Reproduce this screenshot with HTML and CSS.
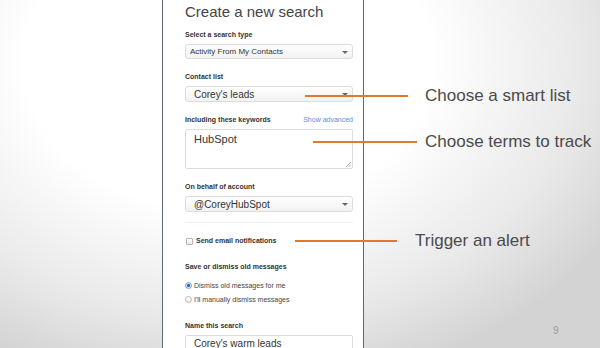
FILE: index.html
```html
<!DOCTYPE html>
<html lang="en">
<head>
    <meta charset="UTF-8">
    <title>Create a new search</title>
    <link rel="stylesheet" href="styles.css">
</head>
<body>
    <div class="slide">
        <div class="panel">
            <h1>Create a new search</h1>

            <div class="field">
                <div class="label">Select a search type</div>
                <div class="select small">Activity From My Contacts<span class="arrow"></span></div>
            </div>

            <div class="field">
                <div class="label">Contact list</div>
                <div class="select">Corey's leads<span class="arrow"></span></div>
            </div>

            <div class="field">
                <div class="label-row">
                    <div class="label">Including these keywords</div>
                    <a class="link">Show advanced</a>
                </div>
                <div class="textarea">
                    HubSpot
                    <svg class="grip" width="6" height="6" viewBox="0 0 6 6">
                        <path d="M1 6 L6 1 M3.5 6 L6 3.5" stroke="#aaa" stroke-width="0.8"/>
                    </svg>
                </div>
            </div>

            <div class="field">
                <div class="label">On behalf of account</div>
                <div class="select">@CoreyHubSpot<span class="arrow"></span></div>
            </div>

            <div class="divider"></div>

            <div class="check-row">
                <span class="checkbox"></span>
                <span class="label">Send email notifications</span>
            </div>

            <div class="label group-label">Save or dismiss old messages</div>
            <div class="radio-row">
                <span class="radio checked"></span>
                <span>Dismiss old messages for me</span>
            </div>
            <div class="radio-row">
                <span class="radio"></span>
                <span>I'll manually dismiss messages</span>
            </div>

            <div class="field name-field">
                <div class="label">Name this search</div>
                <div class="input">Corey's warm leads</div>
            </div>
        </div>

        <!-- annotations drawn over the screenshot -->
        <div class="callout callout-list">
            <span class="callout-line"></span>
            <span class="callout-text">Choose a smart list</span>
        </div>
        <div class="callout callout-terms">
            <span class="callout-line"></span>
            <span class="callout-text">Choose terms to track</span>
        </div>
        <div class="callout callout-alert">
            <span class="callout-line"></span>
            <span class="callout-text">Trigger an alert</span>
        </div>

        <div class="page-number">9</div>
    </div>
</body>
</html>
```

FILE: styles.css
```css
body {
    margin: 0;
    font-family: "Liberation Sans", Arial, sans-serif;
    color: #333;
}

.slide {
    position: relative;
    width: 600px;
    height: 348px;
    overflow: hidden;
    background: radial-gradient(ellipse 75% 95% at 38% 18%, #ffffff 45%, #e9e9e9 78%, #d3d3d3 100%);
}

.panel {
    box-sizing: border-box;
    width: 202px;
    height: 348px;
    margin-left: 162px;
    padding: 3px 10px 0 22px;
    background: #fff;
    border-left: 1px solid #5f686c;
    border-right: 1px solid #5f686c;
}

h1 {
    margin: 0 0 9px;
    font-size: 15px;
    line-height: 18px;
    font-weight: normal;
    color: #444;
}

.field {
    margin-bottom: 13px;
}

.label {
    font-size: 7px;
    line-height: 10px;
    font-weight: bold;
    color: #333;
}

.field .label {
    margin-bottom: 4px;
}

.label-row {
    display: flex;
    justify-content: space-between;
    align-items: flex-start;
}

.link {
    font-size: 7px;
    line-height: 10px;
    color: #5a8fdc;
}

.select {
    position: relative;
    box-sizing: border-box;
    height: 16px;
    padding-left: 8px;
    font-size: 10px;
    line-height: 15px;
    color: #333;
    border: 1px solid #dcdcdc;
    border-radius: 3px;
    background: linear-gradient(#ffffff, #f2f2f2);
}

.select.small {
    height: 15px;
    padding-left: 4px;
    font-size: 8px;
    line-height: 13px;
}

.arrow {
    position: absolute;
    right: 4px;
    top: 6px;
    border-left: 3px solid transparent;
    border-right: 3px solid transparent;
    border-top: 3px solid #666;
}

.textarea {
    position: relative;
    box-sizing: border-box;
    height: 40px;
    padding: 3px 8px;
    font-size: 11px;
    line-height: 12px;
    color: #333;
    border: 1px solid #dcdcdc;
    border-radius: 2px;
}

.grip {
    position: absolute;
    right: 1px;
    bottom: 1px;
}

.divider {
    height: 1px;
    margin: -3px 0 13px;
    background: #f0f0f0;
}

.check-row,
.radio-row {
    display: flex;
    align-items: center;
    gap: 3px;
    height: 10px;
    font-size: 7px;
}

.radio-row {
    gap: 2px;
    color: #444;
}

.checkbox {
    box-sizing: border-box;
    width: 7px;
    height: 7px;
    margin-left: 1px;
    border: 1px solid #b5b5b5;
    border-radius: 1px;
    background: linear-gradient(#fff, #ececec);
}

.group-label {
    margin: 16px 0 8px;
}

.radio {
    box-sizing: border-box;
    width: 7px;
    height: 7px;
    border: 1px solid #b5b5b5;
    border-radius: 50%;
    background: linear-gradient(#fff, #ececec);
}

.radio.checked {
    border-color: #7ea6dc;
    background: radial-gradient(circle, #2b5fa8 1.2px, #cfe0f5 1.8px);
}

.radio-row + .radio-row {
    margin-top: 4px;
}

.name-field {
    margin-top: 17px;
}

.input {
    box-sizing: border-box;
    height: 18px;
    padding-left: 8px;
    font-size: 10px;
    line-height: 16px;
    border: 1px solid #dcdcdc;
    border-radius: 2px;
}

.callout {
    position: absolute;
    display: flex;
    align-items: center;
    height: 20px;
}

.callout-line {
    height: 2px;
    background: #e2792f;
}

.callout-text {
    font-size: 17px;
    color: #4a4a4a;
    white-space: nowrap;
}

.callout-list {
    left: 305px;
    top: 86px;
}

.callout-list .callout-line {
    width: 103px;
    margin-right: 17px;
}

.callout-terms {
    left: 313px;
    top: 132px;
}

.callout-terms .callout-line {
    width: 104px;
    margin-right: 8px;
}

.callout-alert {
    left: 295px;
    top: 231px;
}

.callout-alert .callout-line {
    width: 102px;
    margin-right: 18px;
}

.page-number {
    position: absolute;
    left: 553px;
    top: 325px;
    font-size: 10px;
    color: #999;
}
```
